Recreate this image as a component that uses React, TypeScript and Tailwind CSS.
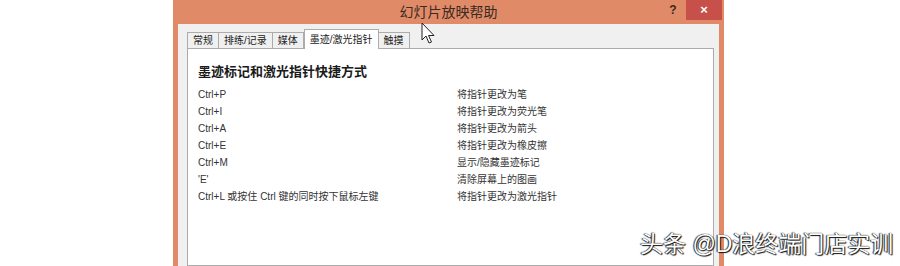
import React from "react";

const tabs = ["常规", "排练/记录", "媒体", "墨迹/激光指针", "触摸"];

const shortcuts: [string, string][] = [
  ["Ctrl+P", "将指针更改为笔"],
  ["Ctrl+I", "将指针更改为荧光笔"],
  ["Ctrl+A", "将指针更改为箭头"],
  ["Ctrl+E", "将指针更改为橡皮擦"],
  ["Ctrl+M", "显示/隐藏墨迹标记"],
  ["'E'", "清除屏幕上的图画"],
  ["Ctrl+L 或按住 Ctrl 键的同时按下鼠标左键", "将指针更改为激光指针"],
];

const font = "font-['Liberation_Sans','Noto_Sans_CJK_SC',sans-serif]";

export default function App() {
  return (
    <div className={`relative h-[266px] w-[900px] overflow-hidden bg-white ${font}`}>
      {/* 对话框窗口 */}
      <div className="ml-[173px] flex h-full w-[551px] flex-col bg-[#e08a68]">
        {/* 标题栏 */}
        <div className="flex h-[24px] shrink-0 items-start">
          <div className="flex-1" />
          <div className="pt-[3px] text-[14px] leading-[18px] text-[#3a2a22]">幻灯片放映帮助</div>
          <div className="flex flex-1 justify-end">
            <div className="flex h-[20px] w-[26px] items-center justify-center text-[12px] font-bold text-[#3a2a22]">?</div>
            <div className="mr-[2px] flex h-[20px] w-[36px] items-center justify-center bg-[#c8504b] text-[13px] font-bold text-white">
              ×
            </div>
          </div>
        </div>

        {/* 内容区 */}
        <div className="mx-[5px] flex flex-1 flex-col bg-[#f0f0f0] pl-[9px] pr-[5px]">
          <div className="flex items-end pt-[5px]">
            {tabs.map((t, i) =>
              i === 3 ? (
                <div
                  key={t}
                  className="relative z-10 -mb-px flex h-[20px] items-center border border-b-0 border-[#acacac] bg-white px-[5px] text-[10px] text-[#222]"
                >
                  {t}
                </div>
              ) : (
                <div
                  key={t}
                  className="flex h-[16px] items-center border border-b-0 border-[#acacac] bg-[#f0f0f0] px-[5px] text-[10px] text-[#222] -ml-px first:ml-0"
                >
                  {t}
                </div>
              )
            )}
          </div>

          <div className="flex-1 border border-[#acacac] bg-white pl-[10px] pt-[15px]">
            <h2 className="text-[13px] font-bold leading-[16px] text-[#1a1a1a]">墨迹标记和激光指针快捷方式</h2>
            <div className="mt-[6px] grid grid-cols-[259px_1fr] text-[10px] leading-[17px] text-[#333]">
              {shortcuts.map(([k, v]) => (
                <React.Fragment key={k}>
                  <div>{k}</div>
                  <div>{v}</div>
                </React.Fragment>
              ))}
            </div>
          </div>
        </div>
      </div>

      {/* 鼠标指针 */}
      <svg className="absolute left-[421px] top-[22px]" width="14" height="23" viewBox="0 0 14 23">
        <path
          d="M1 1 L1 18 L5 14 L8 21 L10.5 20 L7.5 13.5 L13 13.5 Z"
          fill="white"
          stroke="#222"
          strokeWidth="1"
          strokeLinejoin="round"
        />
      </svg>

      {/* 水印 */}
      <div className="absolute left-[640px] top-[230px] text-[23px] leading-[28px] text-white [text-shadow:0_0_1px_#000,1px_1px_1px_#111,-1px_0_1px_#444]">
        头条 @D浪终端门店实训
      </div>
    </div>
  );
}
